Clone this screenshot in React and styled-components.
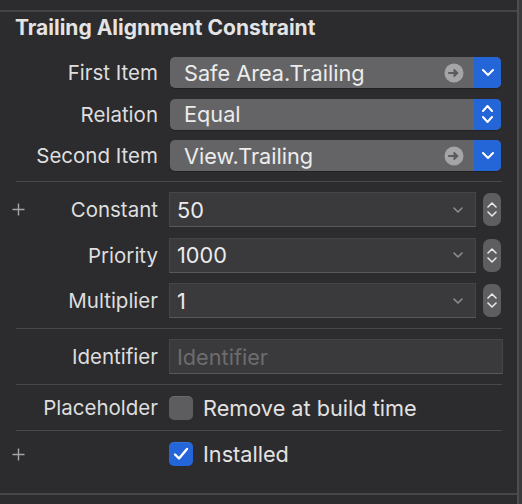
import styled, { createGlobalStyle } from "styled-components";

const GlobalStyle = createGlobalStyle`
  html, body {
    margin: 0;
    padding: 0;
    background: #3a3a3c;
  }
  body {
    font-family: Inter, "Noto Sans", "Liberation Sans", sans-serif;
    -webkit-font-smoothing: antialiased;
  }
`;

const Panel = styled.div`
  width: 519px;
  height: 504px;
  box-sizing: border-box;
  background: #2c2c2e;
  border-right: 2px solid #4d4d50;
  padding-top: 10px;
  color: #dfdfe0;
  font-size: 20.5px;
`;

const TopRule = styled.div`
  height: 2px;
  background: #444446;
`;

const Title = styled.h2`
  margin: 0;
  padding: 5px 0 0 15px;
  height: 40px;
  box-sizing: border-box;
  font-size: 21px;
  font-weight: 700;
  line-height: 22px;
  color: #e4e4e5;
`;

const Section = styled.div`
  display: flex;
  flex-direction: column;
  gap: ${(p) => p.$gap || 10}px;
  padding: ${(p) => p.$pad || "10px 0"};
`;

const Sep = styled.div`
  height: 1px;
  margin: 0 15px 0 16px;
  background: #48484a;
`;

const Row = styled.div`
  display: grid;
  grid-template-columns: 26px 143px 1fr;
  align-items: center;
  height: ${(p) => p.$h}px;
  padding-right: ${(p) => p.$right ?? 15}px;
`;

const PlusCell = styled.div`
  display: flex;
  align-items: center;
  justify-content: flex-end;
  padding-right: 1px;
`;

const Label = styled.div`
  text-align: right;
  white-space: nowrap;
  padding-right: 11px;
  color: #dedede;
`;

const Popup = styled.div`
  display: flex;
  align-items: center;
  height: 31px;
  border-radius: 5px;
  background: #646466;
  overflow: hidden;
  margin-left: 1px;
  box-shadow: 0 1px 0 rgba(0, 0, 0, 0.25);
`;

const PopupText = styled.span`
  flex: 1;
  padding-left: 14px;
  font-size: 21.7px;
  color: #ececec;
`;

const Follow = styled.span`
  display: flex;
  margin-right: 10px;
`;

const BlueEnd = styled.span`
  display: flex;
  align-items: center;
  justify-content: center;
  width: 27px;
  align-self: stretch;
  background: #2465d8;
`;

const UpDown = styled.span`
  display: flex;
  flex-direction: column;
  gap: ${(p) => p.$gap || 4}px;
`;

const FieldWrap = styled.div`
  display: flex;
  align-items: center;
  gap: 7px;
`;

const Field = styled.div`
  flex: 1;
  display: flex;
  align-items: center;
  height: 35px;
  box-sizing: border-box;
  background: #3a3a3c;
  border: 1px solid #454547;
  border-bottom-color: #59595b;
  padding: 0 12px 0 7px;
  font-size: 21.7px;
  color: ${(p) => (p.$placeholder ? "#6c6c6e" : "#ececec")};
`;

const FieldText = styled.span`
  flex: 1;
`;

const Stepper = styled.div`
  display: flex;
  flex-direction: column;
  align-items: center;
  justify-content: center;
  gap: 3px;
  width: 18px;
  height: 33px;
  border-radius: 7px;
  background: #5e5e61;
`;

const CheckLine = styled.label`
  display: flex;
  align-items: center;
  gap: 10px;
  font-size: 21.7px;
  color: #e2e2e2;
`;

const Box = styled.span`
  display: flex;
  align-items: center;
  justify-content: center;
  width: 24px;
  height: 24px;
  border-radius: 5px;
  background: ${(p) => (p.$on ? "#2466d9" : "#5d5d60")};
  box-shadow: inset 0 1px 0 rgba(255, 255, 255, 0.08);
`;

const BottomRule = styled.div`
  height: 2px;
  margin-top: 16px;
  background: #464648;
`;

const Chevron = ({ dir = "down", w = 12, h = 7, color = "#fff", sw = 2 }) => (
  <svg width={w} height={h} viewBox={`0 0 ${w} ${h}`}>
    <polyline
      points={
        dir === "down"
          ? `1,1 ${w / 2},${h - 1} ${w - 1},1`
          : `1,${h - 1} ${w / 2},1 ${w - 1},${h - 1}`
      }
      fill="none"
      stroke={color}
      strokeWidth={sw}
      strokeLinecap="round"
      strokeLinejoin="round"
    />
  </svg>
);

const FollowIcon = () => (
  <svg width="20" height="20" viewBox="0 0 20 20">
    <circle cx="10" cy="10" r="9.5" fill="#a5a5a7" />
    <path d="M5 10h8" stroke="#5c5c5e" strokeWidth="2.2" strokeLinecap="round" />
    <path d="M10 6l4.2 4-4.2 4z" fill="#5c5c5e" stroke="#5c5c5e" strokeWidth="1" strokeLinejoin="round" />
  </svg>
);

const Plus = () => (
  <svg width="13" height="13" viewBox="0 0 13 13">
    <path d="M6.5 0.5v12M0.5 6.5h12" stroke="#a6a6a8" strokeWidth="1.4" />
  </svg>
);

const Check = () => (
  <svg width="16" height="14" viewBox="0 0 16 14">
    <polyline points="2,7.5 6,11.5 14,2" fill="none" stroke="#fff" strokeWidth="2.4" strokeLinecap="round" strokeLinejoin="round" />
  </svg>
);

const PopupRow = ({ label, value, follow, stepper }) => (
  <Row $h={31} $right={16}>
    <PlusCell />
    <Label>{label}</Label>
    <Popup>
      <PopupText>{value}</PopupText>
      {follow && (
        <Follow>
          <FollowIcon />
        </Follow>
      )}
      <BlueEnd>
        {stepper ? (
          <UpDown>
            <Chevron dir="up" w={11} h={7} />
            <Chevron dir="down" w={11} h={7} />
          </UpDown>
        ) : (
          <Chevron />
        )}
      </BlueEnd>
    </Popup>
  </Row>
);

const NumberRow = ({ label, value, plus }) => (
  <Row $h={35} $right={16}>
    <PlusCell>{plus && <Plus />}</PlusCell>
    <Label>{label}</Label>
    <FieldWrap>
      <Field>
        <FieldText>{value}</FieldText>
        <Chevron w={10} h={6} color="#8c8c8e" sw={1.6} />
      </Field>
      <Stepper>
        <Chevron dir="up" w={10} h={6} color="#e6e6e6" sw={1.6} />
        <Chevron dir="down" w={10} h={6} color="#e6e6e6" sw={1.6} />
      </Stepper>
    </FieldWrap>
  </Row>
);

export default function App() {
  return (
    <>
      <GlobalStyle />
      <Panel>
        <TopRule />
        <Title>Trailing Alignment Constraint</Title>
        <Section $pad="5px 0 10px" $gap={10.5}>
          <PopupRow label="First Item" value="Safe Area.Trailing" follow />
          <PopupRow label="Relation" value="Equal" stepper />
          <PopupRow label="Second Item" value="View.Trailing" follow />
        </Section>
        <Sep />
        <Section $gap={10.5}>
          <NumberRow label="Constant" value="50" plus />
          <NumberRow label="Priority" value="1000" />
          <NumberRow label="Multiplier" value="1" />
        </Section>
        <Sep />
        <Section>
          <Row $h={35} $right={14}>
            <PlusCell />
            <Label>Identifier</Label>
            <Field $placeholder>Identifier</Field>
          </Row>
        </Section>
        <Sep />
        <Row $h={45}>
          <PlusCell />
          <Label>Placeholder</Label>
          <CheckLine>
            <Box />
            Remove at build time
          </CheckLine>
        </Row>
        <Sep />
        <Row $h={46}>
          <PlusCell>
            <Plus />
          </PlusCell>
          <Label />
          <CheckLine>
            <Box $on>
              <Check />
            </Box>
            Installed
          </CheckLine>
        </Row>
        <BottomRule />
      </Panel>
    </>
  );
}
